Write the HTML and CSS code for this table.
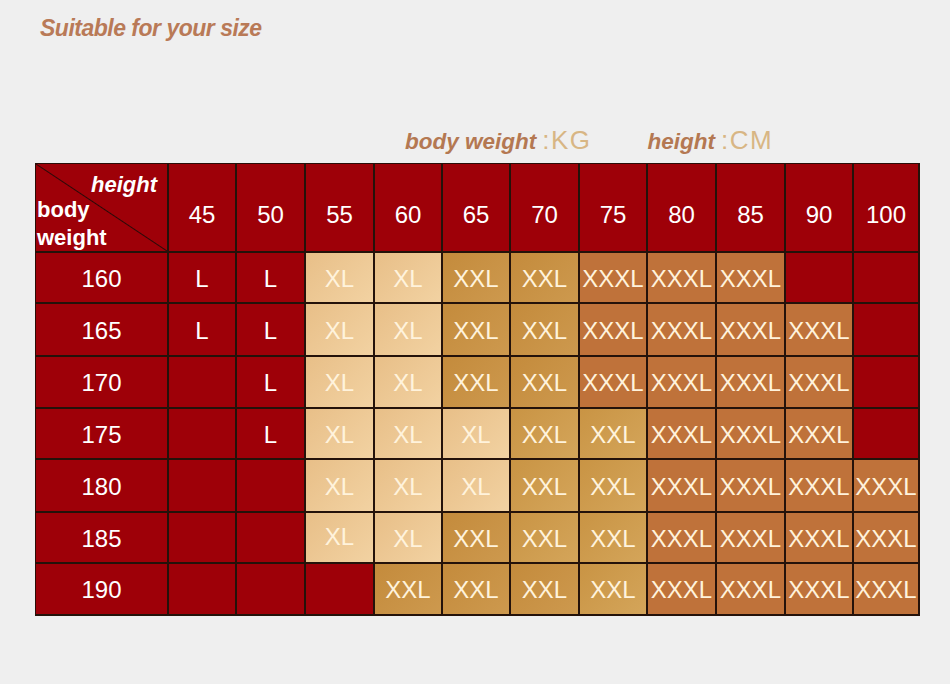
FILE: index.html
```html
<!DOCTYPE html>
<html>
<head>
<meta charset="utf-8">
<link rel="stylesheet" href="styles.css">
</head>
<body>
<div class="page">
  <h1 class="title">Suitable for your size</h1>
  <div class="legend">
    <span class="legend-item"><b>body weight</b> <span class="unit">:KG</span></span>
    <span class="legend-item"><b>height</b> <span class="unit">:CM</span></span>
  </div>
  <div class="chart">
    <div class="cell corner">
      <span class="corner-h">height</span>
      <span class="corner-w">body<br>weight</span>
    </div>
    <div class="cell r top">45</div><div class="cell r top">50</div><div class="cell r top">55</div><div class="cell r top">60</div><div class="cell r top">65</div><div class="cell r top">70</div><div class="cell r top">75</div><div class="cell r top">80</div><div class="cell r top">85</div><div class="cell r top">90</div><div class="cell r top">100</div>

    <div class="cell r hd">160</div>
    <div class="cell r">L</div><div class="cell r">L</div><div class="cell l">XL</div><div class="cell l">XL</div><div class="cell m">XXL</div><div class="cell m">XXL</div><div class="cell d">XXXL</div><div class="cell d">XXXL</div><div class="cell d">XXXL</div><div class="cell r"></div><div class="cell r"></div>

    <div class="cell r hd">165</div>
    <div class="cell r">L</div><div class="cell r">L</div><div class="cell l">XL</div><div class="cell l">XL</div><div class="cell m">XXL</div><div class="cell m">XXL</div><div class="cell d">XXXL</div><div class="cell d">XXXL</div><div class="cell d">XXXL</div><div class="cell d">XXXL</div><div class="cell r"></div>

    <div class="cell r hd">170</div>
    <div class="cell r"></div><div class="cell r">L</div><div class="cell l">XL</div><div class="cell l">XL</div><div class="cell m">XXL</div><div class="cell m">XXL</div><div class="cell d">XXXL</div><div class="cell d">XXXL</div><div class="cell d">XXXL</div><div class="cell d">XXXL</div><div class="cell r"></div>

    <div class="cell r hd">175</div>
    <div class="cell r"></div><div class="cell r">L</div><div class="cell l">XL</div><div class="cell l">XL</div><div class="cell l">XL</div><div class="cell m2">XXL</div><div class="cell m2">XXL</div><div class="cell d">XXXL</div><div class="cell d">XXXL</div><div class="cell d">XXXL</div><div class="cell r"></div>

    <div class="cell r hd">180</div>
    <div class="cell r"></div><div class="cell r"></div><div class="cell l">XL</div><div class="cell l">XL</div><div class="cell l">XL</div><div class="cell m2">XXL</div><div class="cell m2">XXL</div><div class="cell d">XXXL</div><div class="cell d">XXXL</div><div class="cell d">XXXL</div><div class="cell d">XXXL</div>

    <div class="cell r hd">185</div>
    <div class="cell r"></div><div class="cell r"></div><div class="cell l up">XL</div><div class="cell l">XL</div><div class="cell m">XXL</div><div class="cell m2">XXL</div><div class="cell m2">XXL</div><div class="cell d">XXXL</div><div class="cell d">XXXL</div><div class="cell d">XXXL</div><div class="cell d">XXXL</div>

    <div class="cell r hd">190</div>
    <div class="cell r"></div><div class="cell r"></div><div class="cell r"></div><div class="cell m">XXL</div><div class="cell m">XXL</div><div class="cell m">XXL</div><div class="cell m2">XXL</div><div class="cell d">XXXL</div><div class="cell d">XXXL</div><div class="cell d">XXXL</div><div class="cell d">XXXL</div>
  </div>
</div>
</body>
</html>
```
FILE: styles.css
```css
html, body {
  margin: 0;
  padding: 0;
  background: #efefef;
}
.page {
  width: 950px;
  height: 684px;
  font-family: "Liberation Sans", Arial, sans-serif;
  overflow: hidden;
}
.title {
  margin: 0;
  padding: 14px 0 0 40px;
  font-size: 23px;
  line-height: 28px;
  font-weight: bold;
  font-style: italic;
  letter-spacing: -0.5px;
  color: #b97a57;
}
.legend {
  display: flex;
  gap: 56px;
  margin-top: 83px;
  padding-left: 405px;
  height: 32px;
  line-height: 32px;
  align-items: center;
}
.legend-item {
  display: flex;
  align-items: baseline;
  gap: 6px;
}
.legend-item b {
  font-size: 22.5px;
  font-style: italic;
  font-weight: bold;
  color: #b47852;
}
.unit {
  font-size: 26px;
  color: #d8b684;
  letter-spacing: 1.5px;
  font-weight: normal;
}
.chart {
  display: grid;
  grid-template-columns: 133px 68px 69px 69px 68px 68px 69px 68px 69px 69px 68px 66px;
  grid-template-rows: 89px 51px 53px 52px 51px 53px 51px 52px;
  width: max-content;
  margin: 6px 0 0 35px;
  border-left: 1px solid #2a0d08;
  border-top: 1px solid #2a0d08;
}
.cell {
  box-sizing: border-box;
  border-right: 2px solid #24120a;
  border-bottom: 2px solid #24120a;
  display: flex;
  align-items: center;
  justify-content: center;
  font-size: 24px;
  padding-top: 2px;
  color: #fff3dc;
  white-space: nowrap;
  overflow: hidden;
}
.r { background: #9e0008; color: #ffffff; }
.l { background: linear-gradient(135deg, #e8bf88 0%, #f2d2a2 100%); }
.m { background: linear-gradient(135deg, #c48b3c 0%, #cd994e 100%); }
.m2 { background: linear-gradient(135deg, #c99444 0%, #d4a55a 100%); }
.d { background: #bf723a; }
.hd { font-size: 24px; color: #fff; }
.top { font-size: 24px; color: #fff; padding-top: 14px; }
.up { align-items: flex-start; padding-top: 10px; }
.corner {
  position: relative;
  background: linear-gradient(to top right, #9e0008 calc(50% - 1px), #2a0a08 50%, #9e0008 calc(50% + 1px));
  display: flex;
  flex-direction: column;
  align-items: stretch;
  justify-content: flex-start;
  padding: 8px 10px 0 1px;
  color: #fff;
  font-weight: bold;
  font-size: 22px;
}
.corner-h {
  align-self: flex-end;
  font-style: italic;
  line-height: 26px;
}
.corner-w {
  align-self: flex-start;
  line-height: 28px;
  margin-top: -2px;
  text-align: left;
}
```
